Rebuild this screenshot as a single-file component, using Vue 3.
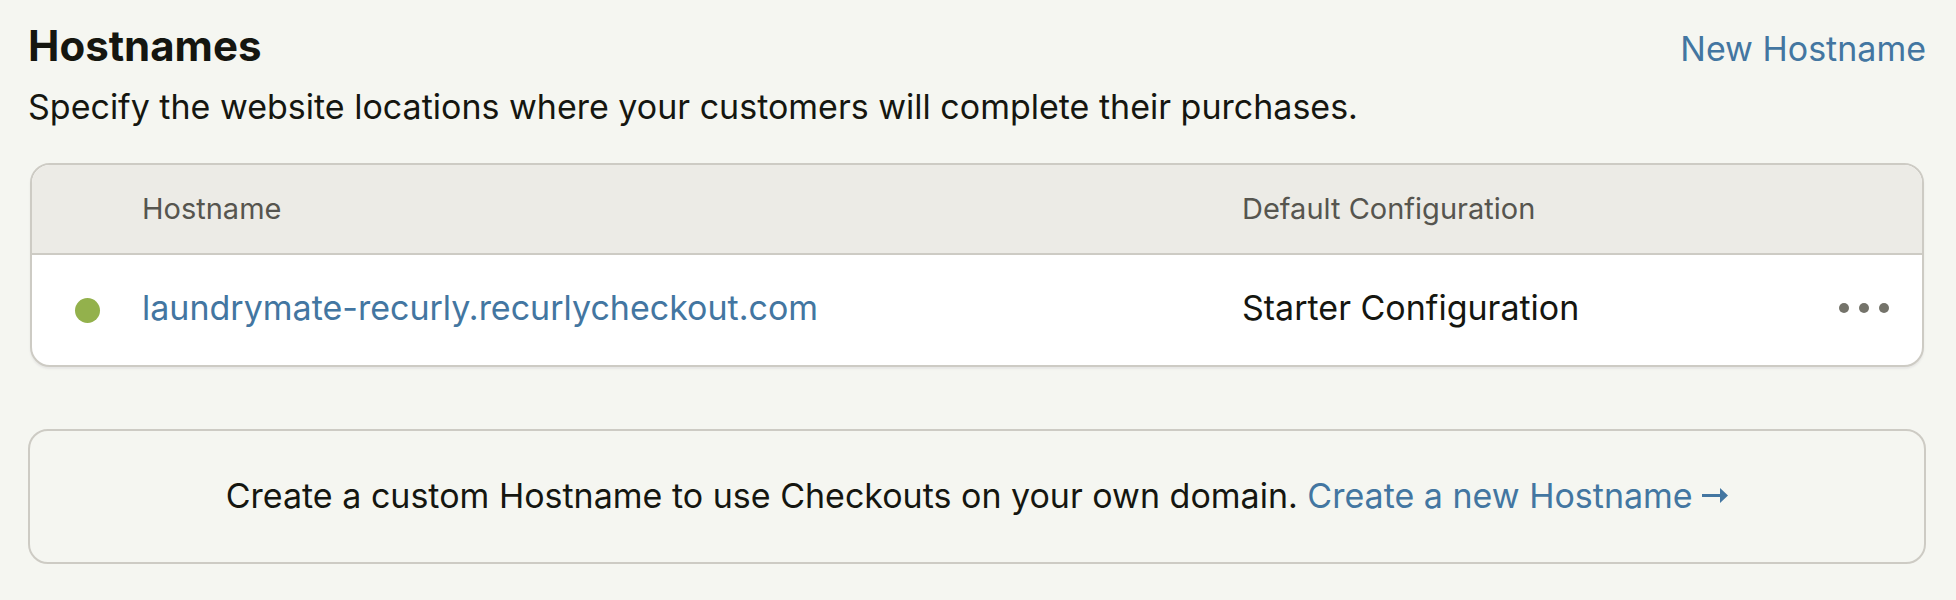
<script setup>
const hostnames = [
  { host: 'laundrymate-recurly.recurlycheckout.com', configuration: 'Starter Configuration' },
]
</script>

<template>
  <main class="page">
    <header class="head">
      <h1>Hostnames</h1>
      <a href="#new">New Hostname</a>
    </header>
    <p class="intro">Specify the website locations where your customers will complete their purchases.</p>

    <div class="card">
      <table>
        <colgroup>
          <col class="col-status">
          <col class="col-host">
          <col class="col-config">
          <col class="col-menu">
        </colgroup>
        <thead>
          <tr>
            <th aria-label="Status"></th>
            <th scope="col">Hostname</th>
            <th scope="col">Default Configuration</th>
            <th aria-label="Actions"></th>
          </tr>
        </thead>
        <tbody>
          <tr v-for="item in hostnames" :key="item.host">
            <td class="status"><span class="dot" role="img" aria-label="Active"></span></td>
            <td><a href="#host">{{ item.host }}</a></td>
            <td>{{ item.configuration }}</td>
            <td class="menu">
              <button type="button" aria-label="More actions">
                <svg width="50" height="10" viewBox="0 0 50 10" fill="currentColor" aria-hidden="true">
                  <circle cx="5" cy="5" r="5" />
                  <circle cx="25" cy="5" r="5" />
                  <circle cx="45" cy="5" r="5" />
                </svg>
              </button>
            </td>
          </tr>
        </tbody>
      </table>
    </div>

    <p class="callout">
      Create a custom Hostname to use Checkouts on your own domain.
      <a href="#create">Create a new Hostname
        <svg class="arrow" width="26" height="15" viewBox="0 0 26 15" fill="currentColor" aria-hidden="true">
          <path d="M0 6H18V0L26 7.5L18 15V9H0Z" />
        </svg>
      </a>
    </p>
  </main>
</template>

<style>
body {
  background: #f5f6f1;
}
</style>

<style scoped>
.page {
  padding: 20px 30px 36px 28px;
  font-family: Inter, "Liberation Sans", sans-serif;
  font-size: 34px;
  line-height: 48px;
  color: #151610;
}
a {
  color: #4376a1;
  text-decoration: none;
}
.head {
  display: flex;
  justify-content: space-between;
  align-items: baseline;
}
h1 {
  margin: 0;
  font-size: 42px;
  line-height: 52px;
  font-weight: 700;
}
.intro {
  margin: 10px 0 32px;
}
.card {
  margin: 0 2px;
  border: 2px solid #cdcbc4;
  border-radius: 20px;
  background: #fff;
  box-shadow: 0 2px 2px #e6e6e4;
  overflow: hidden;
}
table {
  width: 100%;
  table-layout: fixed;
  border-collapse: separate;
  border-spacing: 0;
}
.col-status {
  width: 110px;
}
.col-config {
  width: 560px;
}
.col-menu {
  width: 120px;
}
th {
  height: 88px;
  padding: 0;
  border-bottom: 2px solid #cdcbc4;
  background: #ecebe6;
  color: #56554f;
  font-size: 29px;
  font-weight: 400;
  text-align: left;
}
td {
  height: 106px;
  padding: 0 0 4px;
}
.status {
  height: 110px;
  padding: 0 0 0 43px;
}
.dot {
  display: block;
  width: 25px;
  height: 25px;
  border-radius: 50%;
  background: #93b14c;
}
.menu {
  padding-right: 33px;
}
button {
  display: block;
  margin-left: auto;
  padding: 0;
  border: 0;
  background: none;
  color: #74736a;
  cursor: pointer;
}
button svg {
  display: block;
}
.arrow {
  vertical-align: 5px;
}
.callout {
  margin: 62px 0 0;
  padding: 41px 24px 42px;
  border: 2px solid #cdcbc4;
  border-radius: 20px;
  text-align: center;
}
</style>
